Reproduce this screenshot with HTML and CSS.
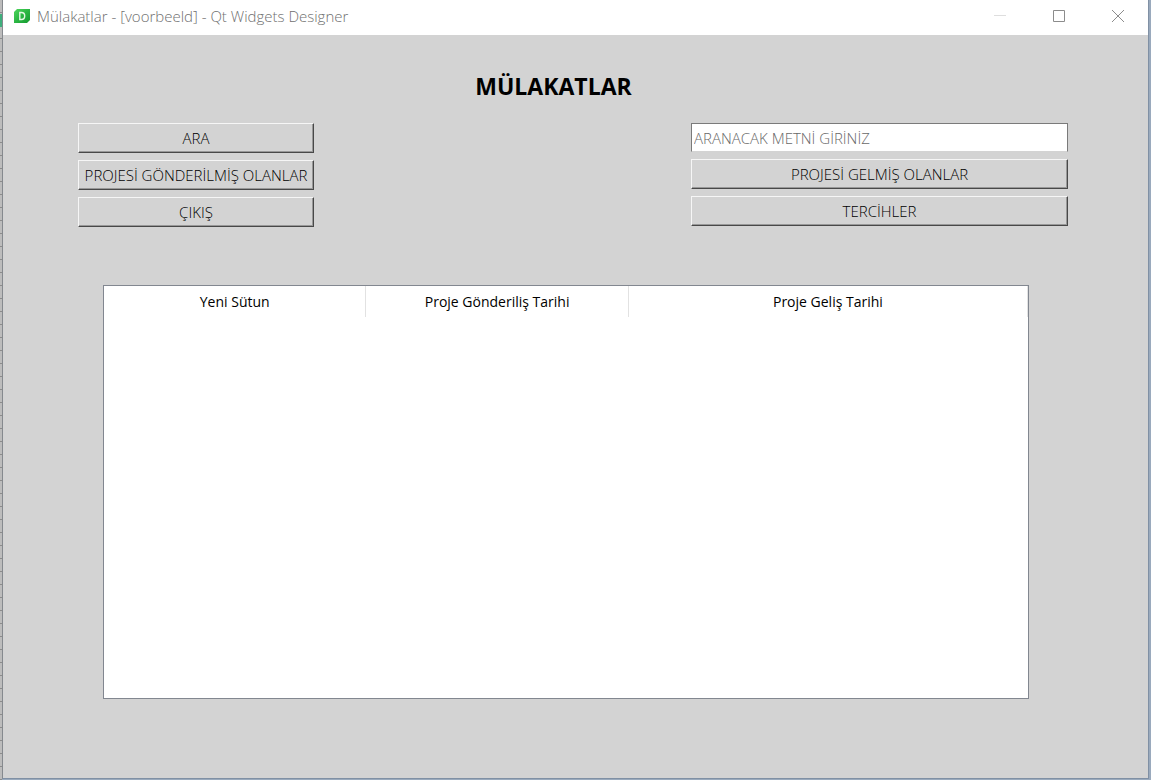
FILE: index.html
```html
<!DOCTYPE html>
<html lang="tr">
<head>
<meta charset="utf-8">
<title>Mülakatlar</title>
<link rel="stylesheet" href="styles.css">
</head>
<body>
<div class="window">
  <header class="titlebar">
    <svg class="app-icon" viewBox="0 0 16 14" aria-hidden="true">
      <defs>
        <linearGradient id="leaf" x1="0" y1="0" x2="1" y2="1">
          <stop offset="0" stop-color="#4fd65c"/>
          <stop offset="0.5" stop-color="#2bb643"/>
          <stop offset="1" stop-color="#169a31"/>
        </linearGradient>
      </defs>
      <path d="M3 0H16V11L13 14H0V3Z" fill="url(#leaf)"/>
      <path d="M5.8 3.5V10.5H7.4C9.6 10.5 10.7 9.3 10.7 7C10.7 4.7 9.6 3.5 7.4 3.5Z" fill="none" stroke="#e4f8e4" stroke-width="1.4"/>
    </svg>
    <span class="caption">Mülakatlar - [voorbeeld] - Qt Widgets Designer</span>
    <div class="window-controls">
      <button class="control minimize" type="button" aria-label="Simge durumuna küçült" disabled>
        <svg viewBox="0 0 12 12"><path d="M0 5.5H12"/></svg>
      </button>
      <button class="control" type="button" aria-label="Ekranı kapla">
        <svg viewBox="0 0 12 12"><path d="M0.5 0.5H11.5V11.5H0.5Z"/></svg>
      </button>
      <button class="control" type="button" aria-label="Kapat">
        <svg viewBox="0 0 12 12"><path d="M0 0L12 12M12 0L0 12"/></svg>
      </button>
    </div>
  </header>
  <main class="content">
    <h1 class="heading">MÜLAKATLAR</h1>
    <div class="actions">
      <div class="stack">
        <button class="button" type="button">ARA</button>
        <button class="button" type="button">PROJESİ GÖNDERİLMİŞ OLANLAR</button>
        <button class="button" type="button">ÇIKIŞ</button>
      </div>
      <div class="stack stack-right">
        <input class="search" type="text" placeholder="ARANACAK METNİ GİRİNİZ" aria-label="Aranacak metin">
        <button class="button" type="button">PROJESİ GELMİŞ OLANLAR</button>
        <button class="button" type="button">TERCİHLER</button>
      </div>
    </div>
    <div class="table-view">
      <table class="table">
        <colgroup><col class="col-name"><col class="col-sent"><col></colgroup>
        <thead>
          <tr>
            <th scope="col">Yeni Sütun</th>
            <th scope="col">Proje Gönderiliş Tarihi</th>
            <th scope="col">Proje Geliş Tarihi</th>
          </tr>
        </thead>
        <tbody></tbody>
      </table>
    </div>
  </main>
</div>
</body>
</html>
```
FILE: styles.css
```css
* {
  box-sizing: border-box;
}

body {
  margin: 0;
  min-height: 100vh;
  display: flex;
  padding: 0 2px 1px;
  background:
    linear-gradient(#3fae7c, #3fae7c) 0 14px / 2px 13px no-repeat,
    repeating-linear-gradient(#bcbcbc 0 12px, #8c8c8c 12px 13px) 0 0 / 2px 100% no-repeat,
    #9aaabd;
  font-family: "Open Sans", "Noto Sans", sans-serif;
  font-size: 14px;
  color: #000;
}

.window {
  flex: 1;
  display: flex;
  flex-direction: column;
  border: 1px solid #8090a4;
  border-top: 0;
  border-left-color: #85898e;
  background: #d3d3d3;
}

.titlebar {
  display: flex;
  align-items: center;
  height: 35px;
  padding: 0 1px 3px 11px;
  background: #fff;
}

.app-icon {
  width: 16px;
  height: 14px;
}

.caption {
  flex: 1;
  margin-left: 7px;
  font-size: 15px;
  font-weight: 300;
  line-height: 20px;
  color: #707070;
}

.window-controls {
  display: flex;
}

.control {
  display: grid;
  place-items: center;
  width: 59px;
  height: 32px;
  padding: 0;
  border: 0;
  background: none;
}

.control svg {
  width: 12px;
  height: 12px;
  fill: none;
  stroke: #8c8c8c;
}

.minimize svg {
  stroke: #dedede;
}

.content {
  flex: 1;
  display: flex;
  flex-direction: column;
  padding: 35px 80px 79px 75px;
}

.heading {
  margin: 0 39px 20px 0;
  font-size: 23px;
  line-height: 33px;
  font-weight: 700;
  text-align: center;
}

.actions {
  display: grid;
  grid-template-columns: 236fr 377fr 377fr;
}

.stack {
  display: flex;
  flex-direction: column;
  gap: 7px;
}

.stack-right {
  grid-column: 3;
}

.button {
  height: 30px;
  padding: 0;
  border: 1px solid;
  border-color: #f6f6f6 #484848 #484848 #f6f6f6;
  background: #d3d3d3;
  box-shadow: inset -1px -1px #989898;
  font-family: inherit;
  font-size: 15px;
  font-weight: 300;
  color: inherit;
  white-space: nowrap;
}

.search {
  height: 29px;
  padding: 1px 2px 0;
  border: 1px solid #7a7a7a;
  border-bottom-color: #d3d3d3;
  border-radius: 0;
  background: #fff;
  font-family: inherit;
  font-size: 15px;
  font-weight: 300;
}

.search::placeholder {
  color: #686868;
  opacity: 1;
}

.table-view {
  flex: 1;
  margin: 58px 39px 0 25px;
  border: 1px solid #828790;
  background: #fff;
}

.table {
  width: 100%;
  table-layout: fixed;
  border-collapse: separate;
  border-spacing: 0;
}

.col-name,
.col-sent {
  width: 28.4%;
}

.table th {
  height: 31px;
  padding: 0;
  border-right: 1px solid #e2e2e2;
  font-weight: 400;
  text-align: center;
}
```
